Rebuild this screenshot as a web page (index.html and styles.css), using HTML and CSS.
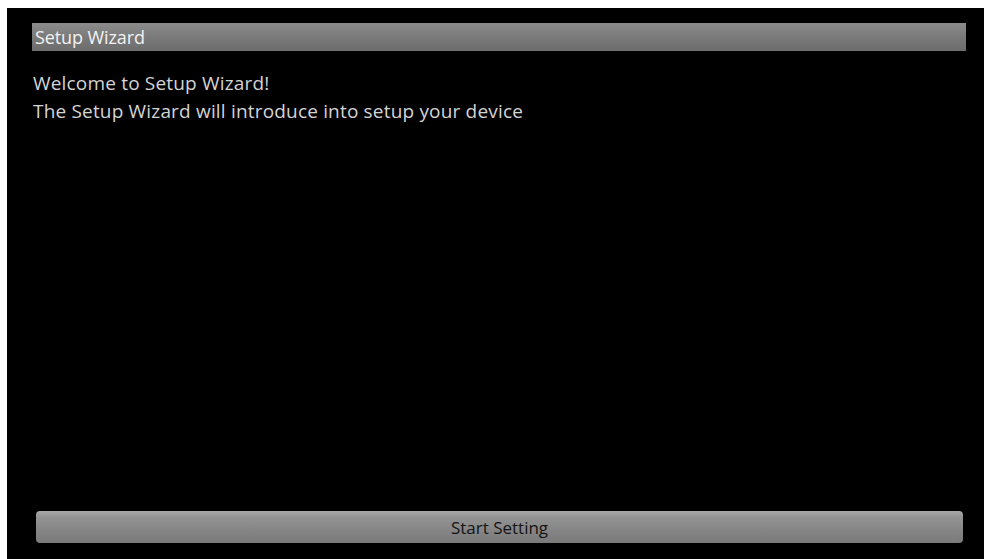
FILE: index.html
```html
<!DOCTYPE html>
<html lang="en">
<head>
<meta charset="utf-8">
<title>Setup Wizard</title>
<link rel="stylesheet" href="styles.css">
</head>
<body>
<div class="screen">
  <div class="title-bar">Setup Wizard</div>
  <div class="content">
    <p class="line">Welcome to Setup Wizard!</p>
    <p class="line">The Setup Wizard will introduce into setup your device</p>
  </div>
  <div class="footer">
    <button class="start-btn">Start Setting</button>
  </div>
</div>
</body>
</html>
```
FILE: styles.css
```css
html, body {
  margin: 0;
  padding: 0;
  background: #ffffff;
  overflow: hidden;
}
body {
  padding: 8px 5px 0 7px;
  font-family: "Open Sans", "DejaVu Sans", sans-serif;
}
.screen {
  background: #000;
  height: 551px;
  display: flex;
  flex-direction: column;
  box-sizing: border-box;
  padding: 15px 18px 0 25px;
}
.title-bar {
  height: 28px;
  line-height: 28px;
  background: linear-gradient(#8c8c8c, #7a7a7a 50%, #6c6c6c);
  color: #f2f2f2;
  font-size: 18px;
  padding-left: 3px;
  letter-spacing: -0.1px;
}
.content {
  flex: 1;
  padding: 18px 0 0 1px;
}
.line {
  margin: 0;
  color: #d4d4d4;
  font-size: 19px;
  line-height: 28px;
  letter-spacing: 0.18px;
}
.footer {
  padding: 0 3px 16px 4px;
}
.start-btn {
  display: block;
  width: 100%;
  height: 32px;
  border: none;
  border-radius: 4px;
  background: linear-gradient(#a8a8a8, #939393 20%, #858585 60%, #7a7a7a);
  color: #141414;
  font-family: "Open Sans", "DejaVu Sans", sans-serif;
  font-size: 17px;
  padding: 0;
}
```
